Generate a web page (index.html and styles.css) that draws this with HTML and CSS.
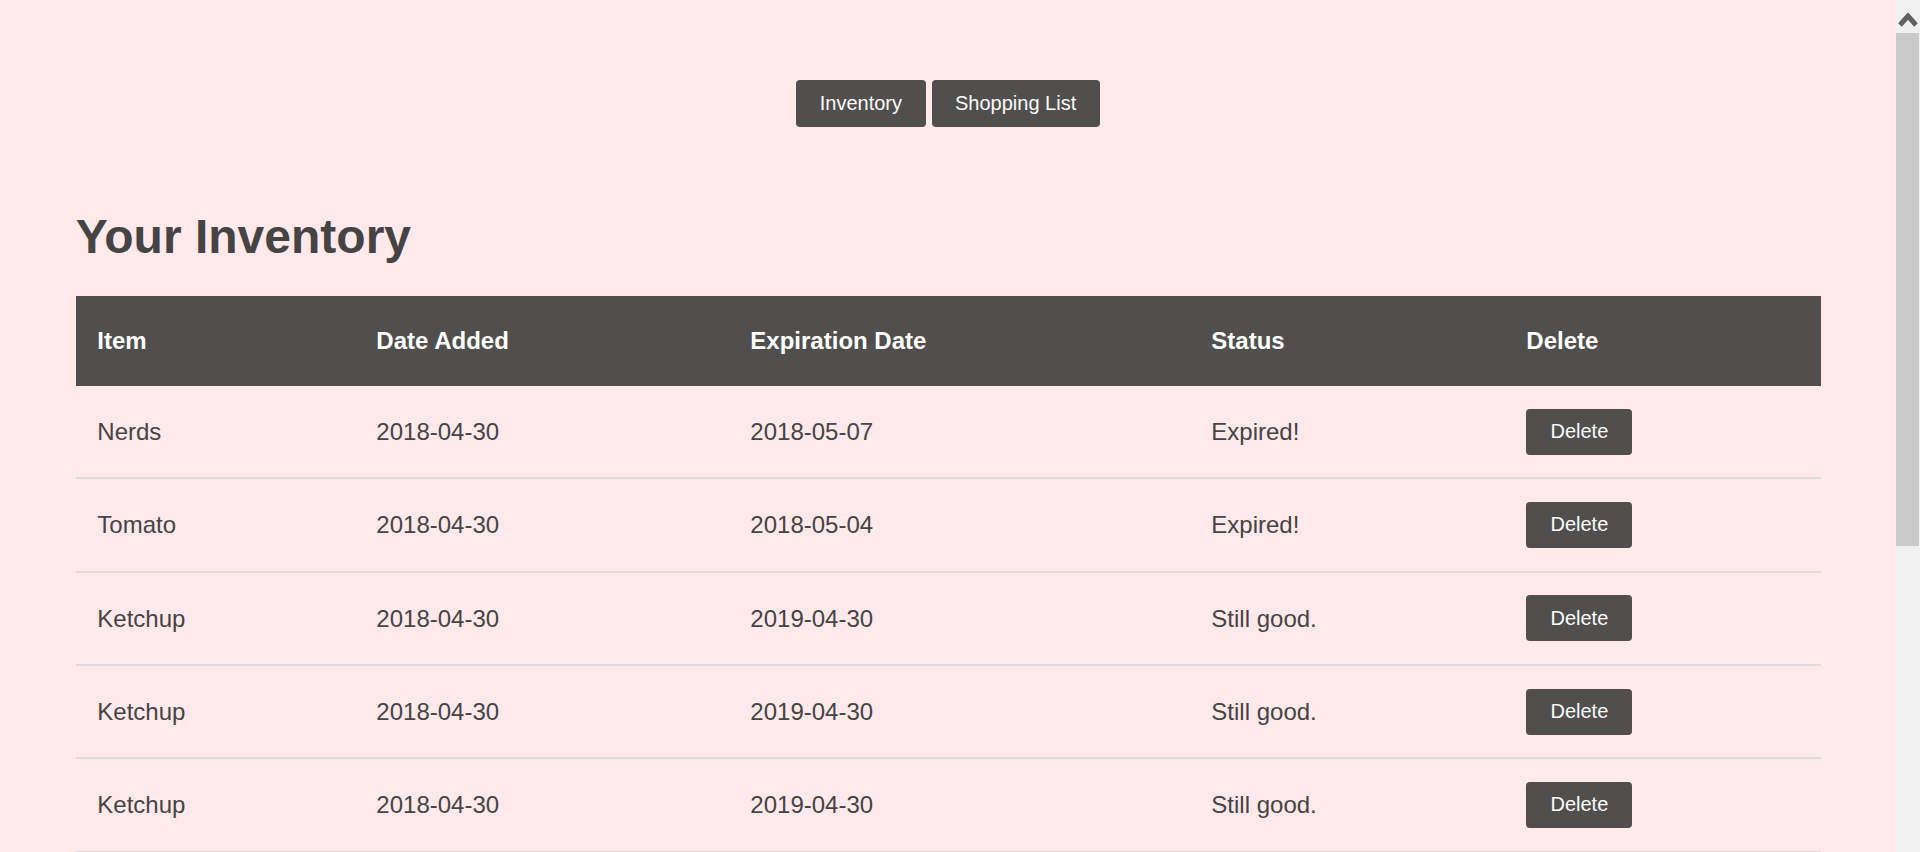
FILE: index.html
```html
<!DOCTYPE html>
<html lang="en">
<head>
<meta charset="utf-8">
<title>Your Inventory</title>
<link rel="stylesheet" href="styles.css">
</head>
<body>
<div class="page">
  <main class="main">
    <nav class="nav">
      <button class="btn nav-btn">Inventory</button>
      <button class="btn nav-btn">Shopping List</button>
    </nav>
    <section class="content">
      <h1 class="title">Your Inventory</h1>
      <table class="inv">
        <colgroup>
          <col class="c1"><col class="c2"><col class="c3"><col class="c4"><col class="c5">
        </colgroup>
        <thead>
          <tr><th>Item</th><th>Date Added</th><th>Expiration Date</th><th>Status</th><th>Delete</th></tr>
        </thead>
        <tbody>
          <tr><td>Nerds</td><td>2018-04-30</td><td>2018-05-07</td><td>Expired!</td><td><button class="btn del-btn">Delete</button></td></tr>
          <tr><td>Tomato</td><td>2018-04-30</td><td>2018-05-04</td><td>Expired!</td><td><button class="btn del-btn">Delete</button></td></tr>
          <tr><td>Ketchup</td><td>2018-04-30</td><td>2019-04-30</td><td>Still good.</td><td><button class="btn del-btn">Delete</button></td></tr>
          <tr><td>Ketchup</td><td>2018-04-30</td><td>2019-04-30</td><td>Still good.</td><td><button class="btn del-btn">Delete</button></td></tr>
          <tr><td>Ketchup</td><td>2018-04-30</td><td>2019-04-30</td><td>Still good.</td><td><button class="btn del-btn">Delete</button></td></tr>
        </tbody>
      </table>
    </section>
  </main>
  <div class="scrollbar">
    <div class="sb-arrow">
      <svg width="24" height="33" viewBox="0 0 24 33"><polyline points="4,25 12,16 20,25" fill="none" stroke="#606060" stroke-width="5"/></svg>
    </div>
    <div class="sb-thumb"></div>
    <div class="sb-track"></div>
  </div>
</div>
</body>
</html>
```
FILE: styles.css
```css
html, body {
  margin: 0;
  padding: 0;
  height: 852px;
  overflow: hidden;
}
body {
  background: #ffe9ea;
  font-family: "Liberation Sans", Arial, sans-serif;
  color: #454444;
}
.page {
  display: flex;
  height: 852px;
}
.main {
  flex: 1;
  height: 852px;
  overflow: hidden;
}
.nav {
  display: flex;
  justify-content: center;
  gap: 6px;
  padding-top: 80px;
  padding-bottom: 50px;
}
.btn {
  background: #504f4d;
  color: #fbfbfb;
  border: none;
  border-radius: 4px;
  font-family: "Liberation Sans", Arial, sans-serif;
  cursor: pointer;
}
.nav-btn {
  font-size: 20px;
  line-height: 23px;
  padding: 12px 23.5px;
}
.content {
  width: 92%;
  margin: 0 auto;
}
.title {
  font-size: 48px;
  line-height: 55px;
  font-weight: bold;
  color: #454343;
  margin: 32px 0 32px 0;
}
.inv {
  width: 100%;
  table-layout: fixed;
  border-collapse: collapse;
}
.c1 { width: 279px; }
.c2 { width: 374px; }
.c3 { width: 461px; }
.c4 { width: 315px; }
.c5 { width: 316px; }
.inv th {
  background: #504f4d;
  color: #ffffff;
  font-size: 24px;
  line-height: 28px;
  font-weight: bold;
  text-align: left;
  padding: 31px 21.5px;
}
.inv td {
  font-size: 24px;
  line-height: 27px;
  padding: 22.67px 21.5px;
  border-bottom: 2px solid #dcdcdc;
  vertical-align: middle;
}
.del-btn {
  font-size: 20px;
  line-height: 23px;
  height: 46px;
  width: 106px;
  padding: 0;
  display: block;
}
.scrollbar {
  width: 24px;
  height: 852px;
  background: #f0f0f0;
  display: flex;
  flex-direction: column;
}
.sb-arrow {
  height: 33px;
}
.sb-arrow svg { display: block; }
.sb-thumb {
  height: 513px;
  margin-right: 1px;
  background: #c9c9c9;
}
.sb-track { flex: 1; }
```
